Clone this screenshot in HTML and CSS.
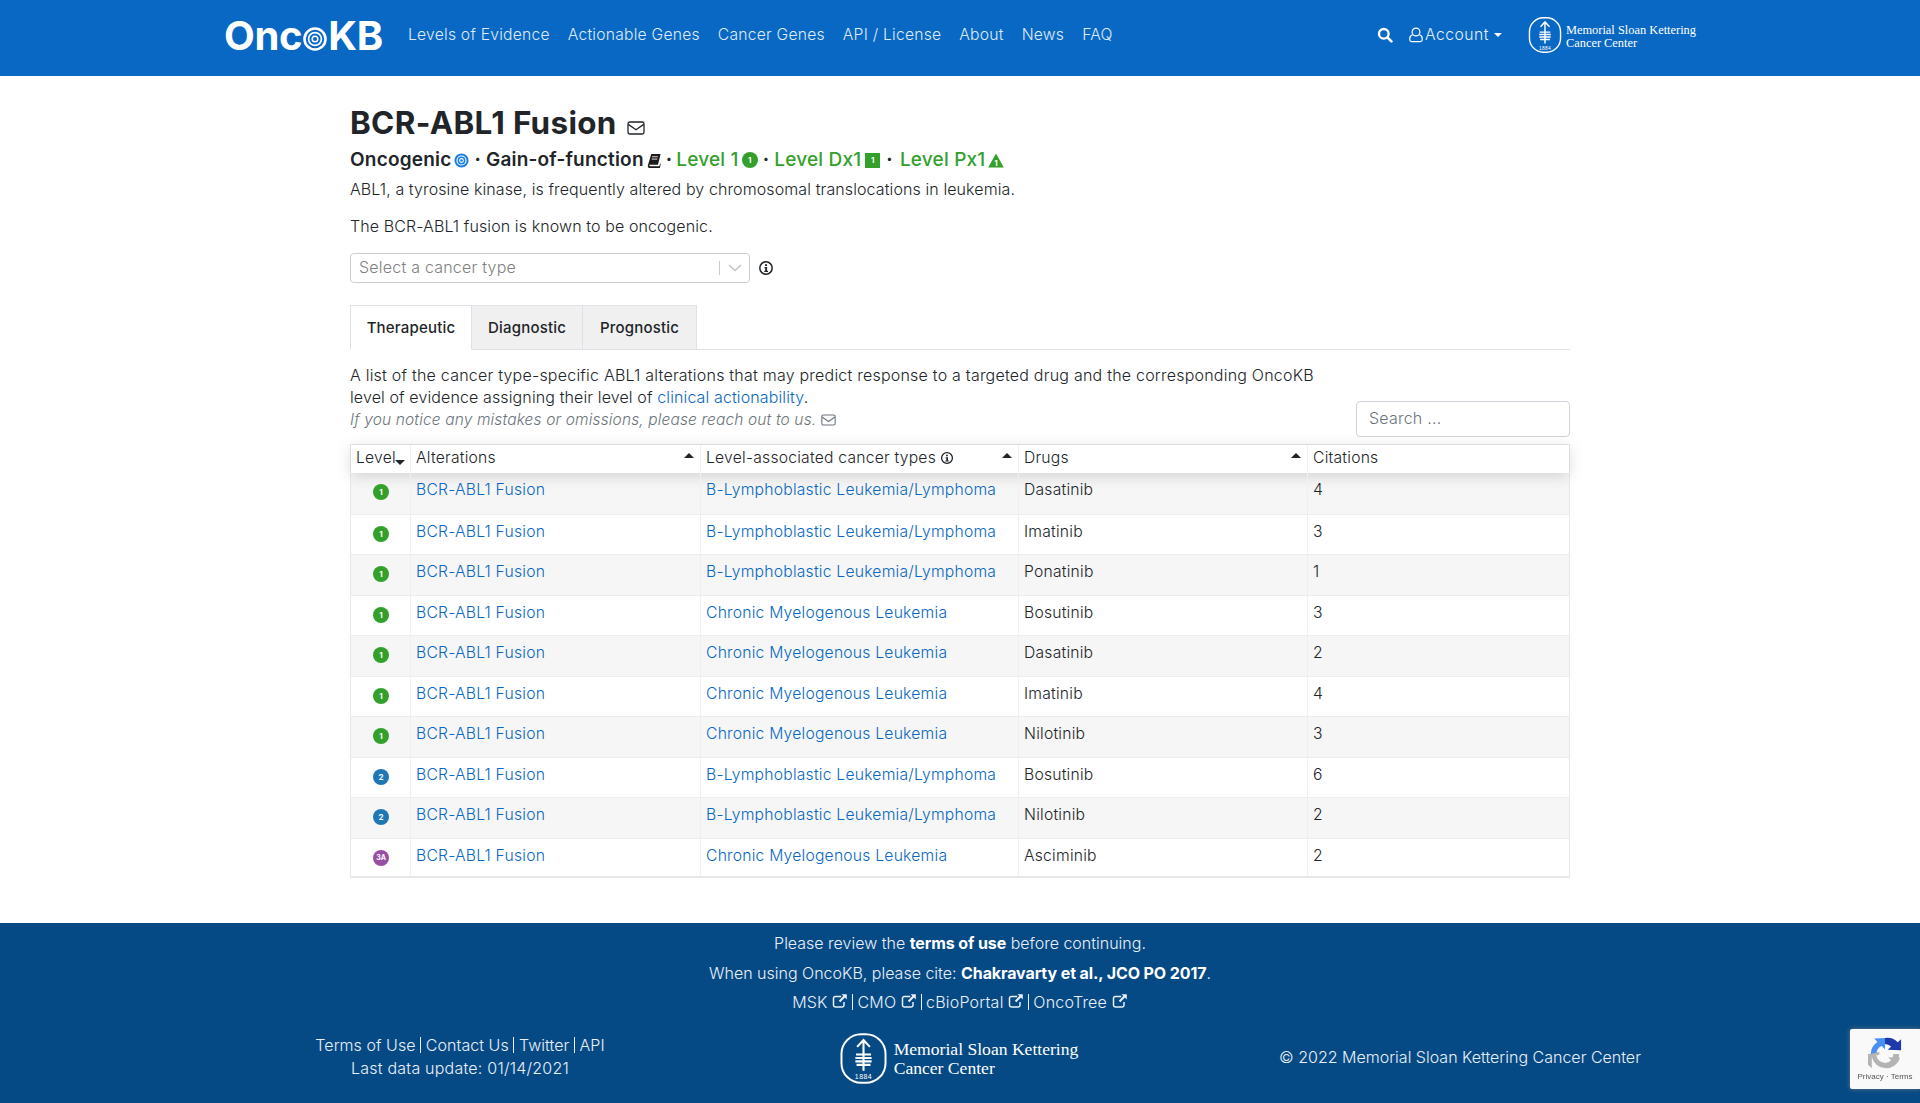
FILE: index.html
```html
<!DOCTYPE html>
<html lang="en">
<head>
<meta charset="utf-8">
<title>BCR-ABL1 Fusion | OncoKB</title>
<link rel="stylesheet" href="styles.css">
</head>
<body>
<svg class="defs" width="0" height="0" aria-hidden="true">
  <symbol id="mail" viewBox="0 0 18 14"><rect x="1" y="1" width="16" height="12" rx="1.8" fill="none" stroke="currentColor" stroke-width="1.3"/><path d="M1.3 3.4 9 8.8l7.700-5.400" fill="none" stroke="currentColor" stroke-width="1.3"/></symbol>
  <symbol id="info" viewBox="0 0 16 16"><circle cx="8" cy="8" r="6.200" fill="none" stroke="currentColor" stroke-width="1.500"/><path d="M7 4.200h2v1.700H7zM6.500 7h2.600v3.800h.9V12H6.200v-1.200h1V8.200h-.7z" fill="currentColor"/></symbol>
  <symbol id="ext" viewBox="0 0 16 16"><path d="M12 9v3.300A1.700 1.700 0 0 1 10.300 14H3.200a1.700 1.700 0 0 1-1.700-1.700V5.200a1.700 1.700 0 0 1 1.700-1.700h6" fill="none" stroke="currentColor" stroke-width="1.500"/><path d="M9.500 1.200h5.300v5.300l-1.900-1.900-4.600 4.700-1.500-1.500 4.600-4.700z" fill="currentColor"/></symbol>
  <symbol id="tree" viewBox="0 0 44 44"><rect x="3" y="1" width="38" height="42" rx="17" fill="none" stroke="currentColor" stroke-width="1.700"/><path d="M22 5.500v27M16.500 12 22 6l5.500 6M15.500 18.500h13M15 21.500h14M15 24.500h14M16 27.500h12" fill="none" stroke="currentColor" stroke-width="1.800"/></symbol>
</svg>

<header class="topbar">
  <div class="topbar-inner">
    <a class="logo">Onc<svg class="logo-target" viewBox="0 0 24 24"><circle cx="12" cy="12" r="10.500" fill="none" stroke="#fff" stroke-width="2.600"/><circle cx="12" cy="12" r="6.400" fill="none" stroke="#fff" stroke-width="1.700"/><circle cx="12" cy="12" r="2.800" fill="none" stroke="#fff" stroke-width="1.500"/></svg>KB</a>
    <nav class="nav">
      <a>Levels of Evidence</a><a>Actionable Genes</a><a>Cancer Genes</a><a>API / License</a><a>About</a><a>News</a><a>FAQ</a>
    </nav>
    <div class="top-right">
      <svg class="search-icon" viewBox="0 0 16 16"><circle cx="6.800" cy="6.800" r="4.800" fill="none" stroke="#fff" stroke-width="2.300"/><path d="m10.400 10.400 4 4" stroke="#fff" stroke-width="2.600" stroke-linecap="round"/></svg>
      <a class="account"><svg class="user-icon" viewBox="0 0 14 16"><circle cx="7" cy="5" r="3.900" fill="none" stroke="#fff" stroke-width="1.200"/><path d="M3.500 7.800C1.900 8.400.8 9.700.8 11.500v1.300c0 1 .8 1.800 1.800 1.800h8.800c1 0 1.800-.8 1.800-1.800v-1.300c0-1.800-1.100-3.100-2.700-3.700" fill="none" stroke="#fff" stroke-width="1.200"/></svg>Account<span class="caret"></span></a>
      <a class="msk-logo msk-logo-top"><svg viewBox="0 0 44 44"><use href="#tree"/><text x="22" y="40" text-anchor="middle" class="msk-year">1884</text></svg><span>Memorial Sloan Kettering<br>Cancer Center</span></a>
    </div>
  </div>
</header>

<main class="page">
  <h1 class="title">BCR-ABL1 Fusion <svg class="title-mail"><use href="#mail"/></svg></h1>
  <div class="summary">
    <span>Oncogenic</span><svg class="oncogenic" viewBox="0 0 16 16"><circle cx="8" cy="8" r="7.500" fill="#1a7fe0"/><circle cx="8" cy="8" r="4.800" fill="none" stroke="#fff" stroke-width="1.200"/><circle cx="8" cy="8" r="2" fill="none" stroke="#fff" stroke-width="1.100"/></svg>
    <b class="dot">·</b><span>Gain-of-function</span><svg class="book" viewBox="0 0 16 16"><path d="M4.500 1h10l-2.800 11.500H3.200c-.6 0-.9.400-.7.900.1.400.5.700 1 .700h9.700l.8-3 .7.600-1 4.300H3C1.600 16 .5 14.700.9 13.200z" fill="#1c1c1c"/><path d="M5.500 4h6M5 6.500h6" stroke="#fff" stroke-width=".9"/></svg>
    <b class="dot dot-wide">·</b><span class="green">Level 1</span><span class="lv lv-one lv-inline">1</span>
    <b class="dot">·</b><span class="green">Level Dx1</span><span class="dx">1</span>
    <b class="dot dot-last">·</b><span class="green">Level Px1</span><svg class="px" viewBox="0 0 16 15"><path d="M8 .5 15.800 14.500H.2z" fill="#33a02c"/><text x="8" y="13" text-anchor="middle" class="px-text">1</text></svg>
  </div>
  <p class="para">ABL1, a tyrosine kinase, is frequently altered by chromosomal translocations in leukemia.</p>
  <p class="para para-second">The BCR-ABL1 fusion is known to be oncogenic.</p>
  <div class="select-row">
    <div class="select"><span>Select a cancer type</span><i class="sep"></i><svg class="chev" viewBox="0 0 14 8"><path d="m1 1 6 5.500L13 1" fill="none" stroke="#c4c4c4" stroke-width="1.600"/></svg></div>
    <svg class="info"><use href="#info"/></svg>
  </div>

  <div class="tabs">
    <a class="tab tab-active">Therapeutic</a><a class="tab">Diagnostic</a><a class="tab">Prognostic</a>
  </div>

  <div class="intro">
    <div class="intro-text">
      <div>A list of the cancer type-specific ABL1 alterations that may predict response to a targeted drug and the corresponding OncoKB <span class="tight">level of evidence assigning their level of <a class="link">clinical actionability</a>.</span></div>
      <div class="reach">If you notice any mistakes or omissions, please reach out to us. <svg class="reach-mail"><use href="#mail"/></svg></div>
    </div>
    <div class="search-box">Search ...</div>
  </div>

  <div class="table">
    <div class="row head">
      <div class="c c1">Level<span class="sort-down"></span></div>
      <div class="c c2">Alterations<span class="sort-up"></span></div>
      <div class="c c3">Level-associated cancer types<svg class="th-info"><use href="#info"/></svg><span class="sort-up"></span></div>
      <div class="c c4">Drugs<span class="sort-up"></span></div>
      <div class="c c5">Citations</div>
    </div>
    <div class="row odd"><div class="c c1"><span class="lv lv-one">1</span></div><div class="c c2 link">BCR-ABL1 Fusion</div><div class="c c3 link">B-Lymphoblastic Leukemia/Lymphoma</div><div class="c c4">Dasatinib</div><div class="c c5">4</div></div>
    <div class="row"><div class="c c1"><span class="lv lv-one">1</span></div><div class="c c2 link">BCR-ABL1 Fusion</div><div class="c c3 link">B-Lymphoblastic Leukemia/Lymphoma</div><div class="c c4">Imatinib</div><div class="c c5">3</div></div>
    <div class="row odd"><div class="c c1"><span class="lv lv-one">1</span></div><div class="c c2 link">BCR-ABL1 Fusion</div><div class="c c3 link">B-Lymphoblastic Leukemia/Lymphoma</div><div class="c c4">Ponatinib</div><div class="c c5">1</div></div>
    <div class="row"><div class="c c1"><span class="lv lv-one">1</span></div><div class="c c2 link">BCR-ABL1 Fusion</div><div class="c c3 link">Chronic Myelogenous Leukemia</div><div class="c c4">Bosutinib</div><div class="c c5">3</div></div>
    <div class="row odd"><div class="c c1"><span class="lv lv-one">1</span></div><div class="c c2 link">BCR-ABL1 Fusion</div><div class="c c3 link">Chronic Myelogenous Leukemia</div><div class="c c4">Dasatinib</div><div class="c c5">2</div></div>
    <div class="row"><div class="c c1"><span class="lv lv-one">1</span></div><div class="c c2 link">BCR-ABL1 Fusion</div><div class="c c3 link">Chronic Myelogenous Leukemia</div><div class="c c4">Imatinib</div><div class="c c5">4</div></div>
    <div class="row odd"><div class="c c1"><span class="lv lv-one">1</span></div><div class="c c2 link">BCR-ABL1 Fusion</div><div class="c c3 link">Chronic Myelogenous Leukemia</div><div class="c c4">Nilotinib</div><div class="c c5">3</div></div>
    <div class="row"><div class="c c1"><span class="lv lv-two">2</span></div><div class="c c2 link">BCR-ABL1 Fusion</div><div class="c c3 link">B-Lymphoblastic Leukemia/Lymphoma</div><div class="c c4">Bosutinib</div><div class="c c5">6</div></div>
    <div class="row odd"><div class="c c1"><span class="lv lv-two">2</span></div><div class="c c2 link">BCR-ABL1 Fusion</div><div class="c c3 link">B-Lymphoblastic Leukemia/Lymphoma</div><div class="c c4">Nilotinib</div><div class="c c5">2</div></div>
    <div class="row"><div class="c c1"><span class="lv lv-three">3A</span></div><div class="c c2 link">BCR-ABL1 Fusion</div><div class="c c3 link">Chronic Myelogenous Leukemia</div><div class="c c4">Asciminib</div><div class="c c5">2</div></div>
  </div>
</main>

<footer class="footer">
  <div class="foot-line foot-first">Please review the <b>terms of use</b> before continuing.</div>
  <div class="foot-line">When using OncoKB, please cite: <b>Chakravarty et al., JCO PO 2017</b>.</div>
  <div class="foot-line foot-links">
    <a>MSK <svg class="ext"><use href="#ext"/></svg></a><span class="bar"></span><a>CMO <svg class="ext"><use href="#ext"/></svg></a><span class="bar"></span><a>cBioPortal <svg class="ext"><use href="#ext"/></svg></a><span class="bar"></span><a>OncoTree <svg class="ext"><use href="#ext"/></svg></a>
  </div>
  <div class="foot-cols">
    <div class="foot-col foot-left">
      <div class="foot-small-links"><a>Terms of Use</a><span class="bar"></span><a>Contact Us</a><span class="bar"></span><a>Twitter</a><span class="bar"></span><a>API</a></div>
      <div class="foot-update">Last data update: 01/14/2021</div>
    </div>
    <div class="foot-col foot-mid"><a class="msk-logo msk-logo-foot"><svg viewBox="0 0 44 44"><use href="#tree"/><text x="22" y="40" text-anchor="middle" class="msk-year">1884</text></svg><span>Memorial Sloan Kettering<br>Cancer Center</span></a></div>
    <div class="foot-col foot-right">© 2022 Memorial Sloan Kettering Cancer Center</div>
  </div>
</footer>

<aside class="recaptcha">
  <svg viewBox="0 0 36 36"><path d="M3 18A15 15 0 0 1 10 5.300L6.500 1.500 18 1v12l-3.500-3.500A9 9 0 0 0 9 18z" fill="#4a90f4"/><path d="M18 1v6.500a11 11 0 0 1 6.500 2.500L21 13.500l14 .5V2.500l-3.500 3A16 16 0 0 0 18 1z" fill="#1c3aa9"/><path d="M3 18h6l-.5 2 3.500-1.500v-3zM9 18a9 9 0 0 0 15.500 6.500l-3-3 12.500 .5a15.500 15.500 0 0 1-30-1V33l-4-3.500V18z" fill="#b4b4b4"/><path d="M33 18a15 15 0 0 1-1 5.500H24.500A9 9 0 0 0 27 18z" fill="#b4b4b4"/></svg>
  <div>Privacy · Terms</div>
</aside>
</body>
</html>
```
FILE: styles.css
```css
* { box-sizing: border-box; }
html, body { margin: 0; padding: 0; }
body {
  font-family: Inter, "Open Sans", sans-serif;
  font-weight: 300;
  font-size: 16px;
  line-height: 24px;
  letter-spacing: 0.22px;
  color: #212529;
  background: #fff;
  min-height: 1103px;
  display: flex;
  flex-direction: column;
  overflow-x: hidden;
}
.defs { position: absolute; }
.msk-year { font: 400 6px "Liberation Sans", sans-serif; fill: #fff; letter-spacing: .4px; }

/* level badges */
.lv {
  display: block;
  width: 16px;
  height: 16px;
  border-radius: 50%;
  color: #fff;
  font-size: 8px;
  font-weight: 700;
  line-height: 16px;
  text-align: center;
  letter-spacing: 0;
  margin: 4px 0 0 17px;
}
.lv-one { background: #33a02c; }
.lv-two { background: #1f78b4; }
.lv-three { background: #984ea3; font-size: 7px; }
.lv-inline { margin: 0 0 0 3px; }
.px-text { font: 700 8px Inter, sans-serif; fill: #fff; }

/* header */
.topbar { height: 76px; background: #0968c3; color: #fff; flex: none; }
.topbar-inner { margin: 0 224px; height: 100%; display: flex; align-items: flex-start; }
.logo {
  font: 700 40px/1 Inter, sans-serif;
  letter-spacing: -.35px;
  color: #fff;
  display: flex;
  align-items: center;
  margin-top: 16px;
  width: 184px;
}
.logo-target { width: 24px; height: 24px; margin: 6px 1px 0 1px; }
.nav { display: flex; gap: 18px; margin-top: 23px; font-size: 15.700px; line-height: 24px; color: #dfeaf6; }
.top-right { margin-left: auto; display: flex; align-items: flex-start; }
.search-icon { width: 16px; height: 16px; margin: 27px 16px 0 0; }
.account { display: flex; align-items: center; margin-top: 23px; font-size: 15.700px; height: 24px; color: #e6eff9; letter-spacing: .5px; }
.user-icon { width: 14px; height: 16px; margin-right: 2px; }
.caret { width: 0; height: 0; margin-left: 5px; border: 4.500px solid transparent; border-top-color: #fff; border-bottom: 0; }
.msk-logo { display: flex; align-items: center; color: #fff; font-family: "Liberation Serif", serif; font-weight: 400; letter-spacing: 0; text-align: left; }
.msk-logo-top { margin: 17px 0 0 25px; font-size: 12.400px; line-height: 13px; }
.msk-logo-top svg { width: 36px; height: 36px; margin-right: 3px; }
.msk-logo-top span { padding-top: 3px; }
.msk-logo-foot { font-size: 17.600px; line-height: 19px; justify-content: center; margin-left: -4px; }
.msk-logo-foot svg { width: 51px; height: 51px; margin-right: 5px; }

/* main */
.page { width: 1220px; margin: 0 auto; flex: 1; }
.title { font-size: 31.400px; line-height: 38px; font-weight: 700; margin: 28px 0 0; letter-spacing: .35px; }
.title-mail { width: 18px; height: 14px; margin-left: 2px; vertical-align: -1px; }
.summary { display: flex; align-items: center; margin-top: 4px; height: 28px; font-size: 19px; font-weight: 600; letter-spacing: .2px; }
.green { color: #33a02c; font-weight: 500; }
.dot { margin: 0 5px; font-weight: 700; }
.dot-wide { margin: 0 4px; }
.dot-last { margin: 0 7px 0 6px; }
.oncogenic { width: 15px; height: 15px; margin-left: 3px; }
.book { width: 15px; height: 15px; margin-left: 3px; }
.dx { width: 15px; height: 15px; margin-left: 4px; background: #33a02c; color: #fff; font-size: 8px; font-weight: 700; line-height: 15px; text-align: center; letter-spacing: 0; }
.px { width: 16px; height: 15px; margin-left: 3px; }
.para { margin: 3px 0 0; height: 24px; letter-spacing: .1px; }
.para-second { margin-top: 13px; }
.select-row { display: flex; align-items: center; margin-top: 15px; height: 30px; }
.select { width: 400px; height: 30px; border: 1px solid #ccc; border-radius: 4px; display: flex; align-items: center; padding-left: 8px; color: #808080; }
.select span { flex: 1; padding-bottom: 2px; }
.sep { width: 1px; height: 14px; background: #ccc; }
.chev { width: 14px; height: 8px; margin: 0 7px 0 8px; }
.info { width: 16px; height: 16px; margin-left: 8px; }

.tabs { display: flex; margin-top: 22px; height: 45px; border-bottom: 1px solid #dee2e6; }
.tab { padding: 10px 0 0; height: 45px; background: #f0f0f0; border: 1px solid #dee2e6; border-left: 0; font-size: 15px; font-weight: 500; width: 111px; text-align: center; letter-spacing: .2px; }
.tab:last-child { width: 114px; }
.tab-active { background: #fff; border-bottom-color: #fff; border-left: 1px solid #dee2e6; width: 122px; }

.intro { display: flex; align-items: flex-end; justify-content: space-between; margin-top: 14px; }
.intro-text { width: 985px; line-height: 22px; padding-bottom: 6px; letter-spacing: .22px; }
.tight { letter-spacing: .12px; }
.reach { font-style: italic; color: #6c757d; margin-top: 1px; font-size: 15.500px; letter-spacing: .14px; }
.reach-mail { width: 15px; height: 12px; vertical-align: -1px; }
.link { color: #0968c3; font-weight: 300; }
.search-box { width: 214px; height: 36px; border: 1px solid #ced4da; border-radius: 4px; padding: 4px 12px; color: #6c757d; }

.table { margin-top: 7px; border: 1px solid #e8e8e8; border-width: 1px 1px 2px; }
.row { display: flex; height: 40.550px; }
.row + .row { border-top: 1px solid #ededed; }
.row:last-child { height: 38.500px; }
.odd { background: #f6f6f6; }
.head { height: 28px; background: #fff; position: relative; box-shadow: 0 3px 15px rgba(0,0,0,.15); }
.row.head + .row { border-top: 0; }
.c { padding: 7px 5px 0; border-right: 1px solid #f0f0f0; font-size: 15.700px; line-height: 20px; position: relative; }
.head .c { padding: 3px 5px 0; }
.c1 { width: 60px; flex: none; padding-top: 7px; }
.c2 { width: 290px; flex: none; }
.c3 { width: 318px; flex: none; }
.c4 { width: 289px; flex: none; }
.c5 { flex: 1; border-right: 0; }
.sort-up, .sort-down { position: absolute; right: 6px; width: 0; height: 0; border: 5px solid transparent; }
.sort-up { top: 8px; border-bottom-color: #212529; border-top: 0; }
.sort-down { right: 5px; top: 15px; border-top-color: #212529; border-bottom: 0; }
.th-info { width: 14px; height: 14px; vertical-align: -2px; margin-left: 4px; }

/* footer */
.footer { background: #064a85; height: 180px; color: #e9f0f7; flex: none; text-align: center; padding-top: 8px; letter-spacing: 0; }
.foot-line { height: 30px; line-height: 24px; }
.foot-line b { font-weight: 700; color: #fff; letter-spacing: -.1px; }
.foot-links { display: flex; justify-content: center; align-items: center; height: 29px; margin-top: -4px; letter-spacing: .22px; }
.ext { width: 16px; height: 16px; vertical-align: -1px; }
.bar { display: inline-block; width: 1px; height: 16px; background: #e9f0f7; margin: 0 4px; }
.foot-cols { display: flex; width: 1500px; margin: 15px auto 0; align-items: center; }
.foot-col { width: 500px; }
.foot-left { letter-spacing: .22px; }
.foot-mid { position: relative; top: 2px; }
.foot-small-links { display: flex; justify-content: center; align-items: center; height: 22px; letter-spacing: .05px; }
.foot-small-links .bar { margin: 0 4.600px; }

/* overlays */
.recaptcha {
  position: fixed; right: 0; top: 1029px; width: 70px; height: 60px;
  background: #f9f9f9; border-radius: 2px 0 0 2px; box-shadow: 0 0 5px rgba(128,128,128,.8);
  text-align: center; padding-top: 8px; color: #555; font: 400 8px/10px "Liberation Sans", sans-serif; letter-spacing: 0;
}
.recaptcha svg { width: 34px; height: 34px; display: block; margin: 0 auto 1px; }
```
